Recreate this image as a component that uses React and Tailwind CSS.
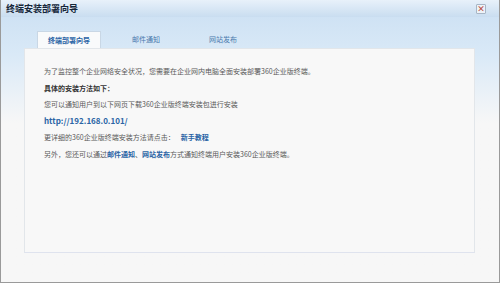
import React from 'react';

const tabs = ['终端部署向导', '邮件通知', '网站发布'];

const App = () => {
  return (
    <div
      className="w-[500px] h-[283px] flex flex-col border border-t-0 border-[#9a9a9a] bg-[#f7f7f7] overflow-hidden"
      style={{ fontFamily: '"Noto Sans CJK SC", "Liberation Sans", sans-serif' }}
    >
      {/* title bar */}
      <div className="h-[17px] flex items-center justify-between pl-[5px] pr-[13px] bg-gradient-to-b from-[#e8f1fa] to-[#c9ddf0]">
        <span className="text-[9px] font-bold text-[#15263a] leading-none">终端安装部署向导</span>
        <div className="w-[10px] h-[10px] border border-[#a7b6c6] bg-[#eef2f7] flex items-center justify-center rounded-[1px]">
          <span className="text-[8px] leading-none text-[#b4443a] font-bold">×</span>
        </div>
      </div>

      {/* body */}
      <div className="flex-1 flex flex-col bg-gradient-to-b from-[#cfe2f4] via-[#d9e9f7] via-[14%] to-[#f7f7f7] to-[40%] pt-[14px] pl-[23px] pr-[24px]">
        <div className="flex gap-[13px] pl-[13px] h-[17px] items-end">
          {tabs.map((t, i) => (
            <div
              key={t}
              className={
                i === 0
                  ? 'w-[64px] h-[17px] flex items-center justify-center bg-[#f9fafb] border border-b-0 border-[#c9d7e5] text-[7px] font-bold text-[#2a64a5]'
                  : 'w-[64px] h-[17px] flex items-center justify-center text-[7px] text-[#4a79ad]'
              }
            >
              {t}
            </div>
          ))}
        </div>
        <div className="h-[205px] bg-[#f8f8f8] border border-[#e2e6ea] border-b-[#dfe3ee] pl-[19px] pt-[14px] text-[7px] leading-[16.5px] text-[#5a5a5a]">
          <p>为了监控整个企业网络安全状况，您需要在企业网内电脑全面安装部署360企业版终端。</p>
          <p className="font-bold text-[#333]">具体的安装方法如下：</p>
          <p>您可以通知用户到以下网页下载360企业版终端安装包进行安装</p>
          <p className="font-bold text-[#2a64a5] text-[8px]">http://192.168.0.101/</p>
          <p>
            更详细的360企业版终端安装方法请点击：
            <span className="font-bold text-[#2a64a5] ml-[6px]">新手教程</span>
          </p>
          <p>
            另外，您还可以通过<span className="font-bold text-[#2a64a5]">邮件通知</span>、
            <span className="font-bold text-[#2a64a5]">网站发布</span>方式通知终端用户安装360企业版终端。
          </p>
        </div>
      </div>
    </div>
  );
};

export default App;
